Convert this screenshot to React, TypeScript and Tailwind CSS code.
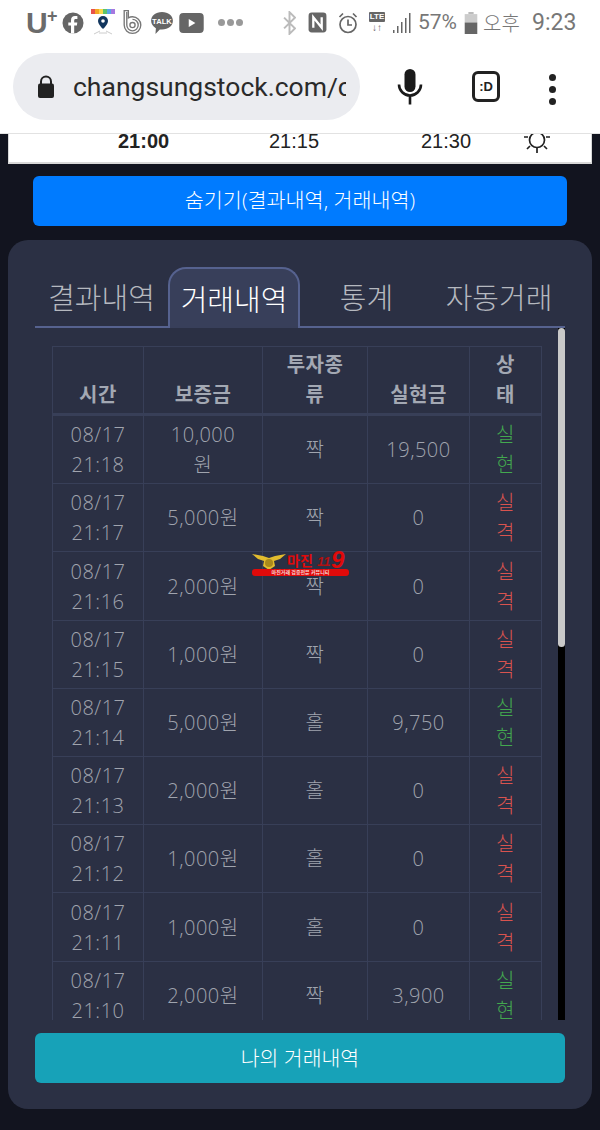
import React from 'react';

const TRADES = [
  { date: '08/17', time: '21:18', amount: '10,000', unit: true, kind: '짝', payout: '19,500', win: true },
  { date: '08/17', time: '21:17', amount: '5,000원', kind: '짝', payout: '0', win: false },
  { date: '08/17', time: '21:16', amount: '2,000원', kind: '짝', payout: '0', win: false },
  { date: '08/17', time: '21:15', amount: '1,000원', kind: '짝', payout: '0', win: false },
  { date: '08/17', time: '21:14', amount: '5,000원', kind: '홀', payout: '9,750', win: true },
  { date: '08/17', time: '21:13', amount: '2,000원', kind: '홀', payout: '0', win: false },
  { date: '08/17', time: '21:12', amount: '1,000원', kind: '홀', payout: '0', win: false },
  { date: '08/17', time: '21:11', amount: '1,000원', kind: '홀', payout: '0', win: false },
  { date: '08/17', time: '21:10', amount: '2,000원', kind: '짝', payout: '3,900', win: true },
];

const TH = 'border border-[#383f58] border-b-[3px] px-1 pb-[3px] pt-[3px] align-bottom font-bold text-[20px] leading-[30px] text-[#a3a8b3]';
const TD = 'border border-[#383f58] px-1 pt-[4.2px] pb-[3px] text-center align-middle leading-[30px]';

const StatusBar = () => (
  <div className="h-[50px] flex items-center bg-white text-[#6b6b6b] shrink-0 pb-[5px]">
    <div className="w-[26px]" />
    <span className="font-bold text-[30px] leading-none w-[21px] font-['Liberation_Sans',sans-serif]">U</span>
    <span className="font-bold text-[18px] leading-none -mt-[14px] w-[11px] font-['Liberation_Sans',sans-serif]">+</span>
    <svg viewBox="0 0 22 22" className="w-[22px] h-[22px] ml-[4px]">
      <circle cx="11" cy="11" r="10.500" fill="#666" />
      <path d="M12.200 21.500v-8h2.700l.4-3.100h-3.100V8.500c0-.9.3-1.500 1.500-1.500h1.700V4.200c-.3 0-1.300-.1-2.400-.1-2.400 0-4 1.400-4 4.100v2.200H6.300v3.100H9v8z" fill="#fff" />
    </svg>
    <svg viewBox="0 0 26 28" className="w-[26px] h-[28px] ml-[6px] -mt-[2px]">
      <rect x="1" y="1" width="4" height="5" fill="#e8524a" />
      <rect x="5" y="1" width="4" height="5" fill="#f5a623" />
      <rect x="9" y="1" width="4" height="5" fill="#f7d94c" />
      <rect x="13" y="1" width="4" height="5" fill="#5cc46b" />
      <rect x="17" y="1" width="4" height="5" fill="#58a6e8" />
      <rect x="21" y="1" width="4" height="5" fill="#a678e0" />
      <path d="M13 8a5 5 0 0 1 5 5c0 3.500-5 8-5 8s-5-4.500-5-8a5 5 0 0 1 5-5z" fill="#12365e" />
      <circle cx="13" cy="13" r="1.800" fill="#fff" />
      <path d="M4 26l6-3M22 26l-6-3M9 25h8" stroke="#ccc" strokeWidth="1" />
    </svg>
    <svg viewBox="0 0 20 26" className="w-[21px] h-[27px] ml-[6px]" fill="none" stroke="#777" strokeWidth="1.300">
      <path d="M2 1.500v14a8 8 0 1 0 8-8 8 8 0 0 0-4 1V1.500z" />
      <path d="M4.500 3v12.500a5.500 5.500 0 1 0 5.500-5.500" />
      <circle cx="10" cy="15.500" r="2.500" />
    </svg>
    <svg viewBox="0 0 22 22" className="w-[24px] h-[24px] ml-[7px]">
      <path d="M11 1c5.800 0 10 3.400 10 8s-4.200 8-10 8c-.7 0-1.300 0-2-.1L5 21l.4-5.200C2.800 14.400 1 11.900 1 9c0-4.600 4.200-8 10-8z" fill="#666" />
      <text x="11" y="11.800" textAnchor="middle" fontSize="7" fontWeight="700" fill="#fff" fontFamily="'Liberation Sans',sans-serif">TALK</text>
    </svg>
    <svg viewBox="0 0 22 18" className="w-[25px] h-[20px] ml-[5px]">
      <rect width="22" height="18" rx="3.500" fill="#666" />
      <path d="M8.500 5.500l6 3.500-6 3.500z" fill="#fff" />
    </svg>
    <div className="flex gap-[2px] ml-[14px]">
      <span className="w-[7px] h-[7px] rounded-full bg-[#999]" />
      <span className="w-[7px] h-[7px] rounded-full bg-[#999]" />
      <span className="w-[7px] h-[7px] rounded-full bg-[#999]" />
    </div>
    <svg viewBox="0 0 12 22" className="w-[13px] h-[24px] ml-[40px]" fill="none" stroke="#bbb" strokeWidth="1.800">
      <path d="M1 6l10 10-5 5V1l5 5L1 16" />
    </svg>
    <svg viewBox="0 0 18 20" className="w-[19px] h-[21px] ml-[12px]">
      <rect x="0.500" y="0.500" width="17" height="19" rx="3" fill="#666" />
      <path d="M5 15V5l8 10V5" fill="none" stroke="#fff" strokeWidth="2.200" />
    </svg>
    <svg viewBox="0 0 20 22" className="w-[20px] h-[22px] ml-[11px]" fill="none" stroke="#666" strokeWidth="1.700">
      <circle cx="10" cy="12.500" r="8" />
      <path d="M10 7.500v5.500h4M1.500 5L5 1.500M18.500 5L15 1.500" />
    </svg>
    <div className="w-[16px] ml-[11px] flex flex-col items-center">
      <span className="bg-[#666] text-white text-[8px] leading-[10px] font-bold px-[1px] rounded-[1px] font-['Liberation_Sans',sans-serif]">LTE</span>
      <span className="text-[#666] text-[10px] leading-[11px] font-bold font-['Liberation_Sans',sans-serif]">↓↑</span>
    </div>
    <svg viewBox="0 0 20 22" className="w-[20px] h-[22px] ml-[7px]">
      <path d="M1 21h1.500v-3H1zM5 21h1.500v-7H5zM9 21h1.500V10H9zM13 21h1.500V6H13zM17 21h1.500V1H17z" fill="#666" />
    </svg>
    <span className="text-[21px] leading-none ml-[6px] w-[40px] whitespace-nowrap text-[#777] font-['Roboto',sans-serif]">57%</span>
    <svg viewBox="0 0 12 21" className="w-[14px] h-[22px] ml-[6px]">
      <rect x="3.500" y="0" width="5" height="2" fill="#bbb" />
      <rect x="0" y="2" width="12" height="8" fill="#ccc" />
      <rect x="0" y="10" width="12" height="11" fill="#666" />
    </svg>
    <span className="text-[20px] leading-none ml-[5px] w-[49px] text-[#777] whitespace-nowrap font-light font-['Noto_Sans_CJK_KR',sans-serif]">오후</span>
    <span className="text-[23px] leading-none text-[#777] whitespace-nowrap font-['Roboto',sans-serif]">9:23</span>
  </div>
);

const BrowserBar = () => (
  <div className="h-[84px] flex items-start bg-white border-b-[1px] border-[#e2e2e2] shrink-0 pt-[3px] pl-[13px]">
    <div className="w-[347px] h-[67px] rounded-full bg-[#ebecf0] flex items-center pl-[24px]">
      <svg viewBox="0 0 18 24" className="w-[18px] h-[24px] shrink-0">
        <path d="M4 9V6.500a5 5 0 0 1 10 0V9" fill="none" stroke="#222" strokeWidth="2" />
        <rect x="1" y="8.500" width="16" height="14.500" rx="2" fill="#222" />
      </svg>
      <span className="ml-[18px] w-[273px] overflow-hidden whitespace-nowrap text-[26.5px] leading-[34px] text-[#2a2a2a] font-['Roboto',sans-serif]">changsungstock.com/chart</span>
    </div>
    <svg viewBox="0 0 26 36" className="w-[26px] h-[36px] ml-[37px] mt-[16px]">
      <rect x="7.500" y="0" width="11" height="23" rx="5.500" fill="#1a1a1a" />
      <path d="M2 15.500a11 11 0 0 0 22 0M13 26.500v9" fill="none" stroke="#1a1a1a" strokeWidth="2.600" />
    </svg>
    <div className="w-[28px] h-[31px] ml-[49px] mt-[18px] rounded-[6px] border-[3px] border-[#222] flex items-center justify-center text-[13px] font-bold leading-none text-[#222] font-['Liberation_Sans',sans-serif]">:D</div>
    <div className="flex flex-col gap-[5px] ml-[49px] mt-[21px]">
      <span className="w-[7px] h-[7px] rounded-full bg-[#222]" />
      <span className="w-[7px] h-[7px] rounded-full bg-[#222]" />
      <span className="w-[7px] h-[7px] rounded-full bg-[#222]" />
    </div>
  </div>
);

const Watermark = () => (
  <div className="absolute left-[252px] top-[553px] w-[98px] h-[24px]">
    <svg viewBox="0 0 34 18" className="absolute left-0 top-0 w-[34px] h-[18px]">
      <path d="M0 1l11 2 6 2 6-2 11-2-6 5-6 2 1 5-6 4-6-4 1-5-6-2z" fill="#e2bc2e" />
      <circle cx="17" cy="10" r="4" fill="#a98a1c" />
    </svg>
    <span className="absolute left-[35px] -top-[1px] text-[14px] leading-[18px] font-bold text-[#e00a0a]">마진</span>
    <span className="absolute left-[65px] top-[2px] text-[13px] leading-[14px] font-bold italic text-[#b01010] font-['Liberation_Sans',sans-serif]">11</span>
    <span className="absolute left-[79px] -top-[3px] text-[24px] leading-[20px] font-bold italic text-[#e00a0a] font-['Liberation_Sans',sans-serif]">9</span>
    <div className="absolute left-0 top-[16px] w-[97px] h-[7px] rounded-[3px] bg-[#e00a0a] text-center text-[5px] leading-[7px] font-bold text-[#f4d6d6]">마진거래 검증전문 커뮤니티</div>
  </div>
);

const App: React.FC = () => {
  return (
    <div className="relative w-[600px] h-[1130px] overflow-hidden bg-[#12141f] flex flex-col antialiased font-['Open_Sans','Noto_Sans_CJK_KR',sans-serif]">
      <StatusBar />
      <BrowserBar />

      <div className="mx-[8px] h-[30px] shrink-0 bg-white border-x-[1px] border-b-[2px] border-[#d8d8d8] relative flex text-[20px] leading-[15px] text-[#222] font-['Liberation_Sans',sans-serif]">
        <span className="absolute left-[109px] top-0 font-bold">21:00</span>
        <span className="absolute left-[260px] top-0">21:15</span>
        <span className="absolute left-[412px] top-0">21:30</span>
        <svg viewBox="0 0 26 22" className="absolute left-[515px] top-0 w-[26px] h-[22px]" fill="none" stroke="#222" strokeWidth="1.700">
          <circle cx="13" cy="6" r="7.500" />
          <path d="M13 14v5M4 3l-4 0M22 3l4 0M6 12l-3 3M20 12l3 3" />
        </svg>
      </div>

      <button className="mx-[33px] mt-[12px] h-[50px] shrink-0 rounded-[6px] bg-[#007bff] text-white text-[20.7px] font-light">숨기기(결과내역, 거래내역)</button>

      <div className="mx-[8px] mt-[14px] h-[869px] shrink-0 rounded-[20px] bg-[#2b3044] pt-[27px] px-[27px] flex flex-col">
        <div className="h-[61px] shrink-0 flex border-b-[2px] border-[#56628f] text-[29px] leading-none font-light text-[#b5b8bf]">
          <div className="w-[133px] flex items-center justify-center pt-[1px]">결과내역</div>
          <div className="w-[132px] -mb-[2px] rounded-t-[18px] border-x-[2px] border-t-[2px] border-[#56628f] bg-[#383f5a] text-white flex items-center justify-center pt-[1px]">거래내역</div>
          <div className="w-[133px] flex items-center justify-center pt-[1px]">통계</div>
          <div className="w-[132px] flex items-center justify-center pt-[1px]">자동거래</div>
        </div>

        <div className="relative h-[692px] shrink-0 overflow-hidden pl-[17px] pt-[18px]">
          <table className="w-[489px] table-fixed border-collapse text-[20px] tracking-[0.5px] font-light text-[#a0a4ae]">
            <thead>
              <tr>
                <th className={`${TH} w-[91px]`}>시간</th>
                <th className={`${TH} w-[119px]`}>보증금</th>
                <th className={`${TH} w-[105px]`}>투자종<br />류</th>
                <th className={`${TH} w-[102px]`}>실현금</th>
                <th className={`${TH} w-[72px]`}>상<br />태</th>
              </tr>
            </thead>
            <tbody>
              {TRADES.map((t) => (
                <tr key={t.time}>
                  <td className={TD}>{t.date}<br />{t.time}</td>
                  <td className={TD}>{t.amount}{t.unit && <><br />원</>}</td>
                  <td className={TD}>{t.kind}</td>
                  <td className={TD}>{t.payout}</td>
                  <td className={`${TD} ${t.win ? 'text-[#43a84f]' : 'text-[#d9534f]'}`}>실<br />{t.win ? '현' : '격'}</td>
                </tr>
              ))}
            </tbody>
          </table>
          <div className="absolute right-0 top-0 bottom-0 w-[7px] bg-black">
            <div className="h-[319px] rounded-full bg-[#c9c9c9]" />
          </div>
        </div>

        <button className="mt-[13px] h-[50px] shrink-0 rounded-[6px] bg-[#17a2b8] text-white text-[20.5px] font-light">나의 거래내역</button>
      </div>

      <Watermark />
    </div>
  );
};

export default App;
